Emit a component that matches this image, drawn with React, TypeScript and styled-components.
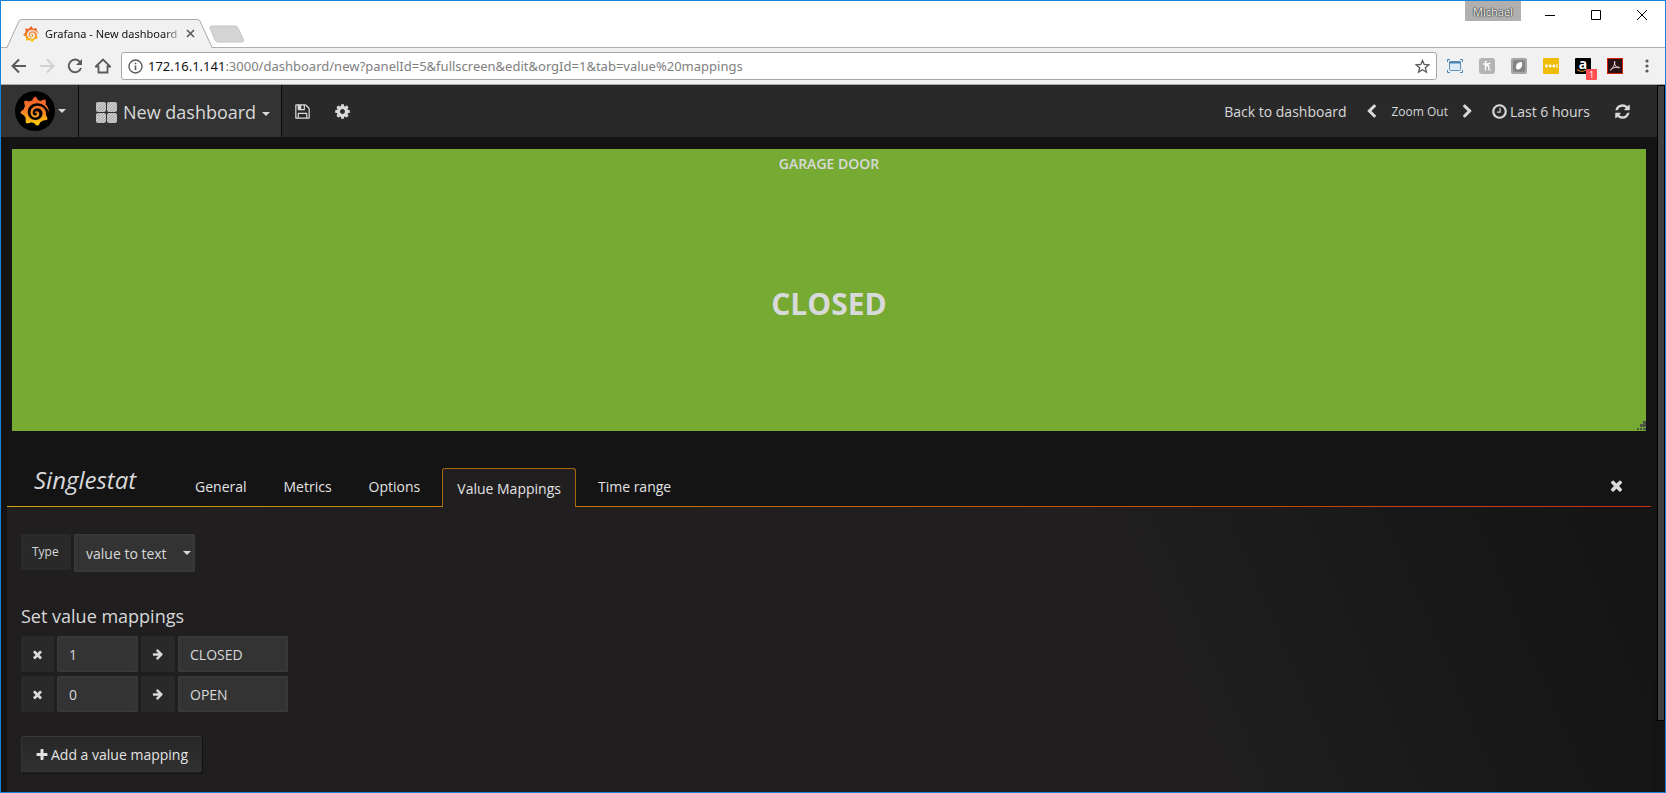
import React, { useState } from "react";
import styled, { createGlobalStyle, css } from "styled-components";

const Global = createGlobalStyle`
  *, *::before, *::after { box-sizing: border-box; }
  html, body, #root { height: 100%; }
  body { margin: 0; overflow: hidden; background: #141414; font-family: "Open Sans", "Noto Sans", sans-serif; }
  button, input, select { font-family: inherit; }
  button { cursor: pointer; }
`;

/* ---------- icons ---------- */

const paths = {
  times: "M1490 1322q0 40-28 68l-136 136q-28 28-68 28t-68-28l-294-294-294 294q-28 28-68 28t-68-28l-136-136q-28-28-28-68t28-68l294-294-294-294q-28-28-28-68t28-68l136-136q28-28 68-28t68 28l294 294 294-294q28-28 68-28t68 28l136 136q28 28 28 68t-28 68l-294 294 294 294q28 28 28 68z",
  plus: "M1600 736v192q0 40-28 68t-68 28h-416v416q0 40-28 68t-68 28h-192q-40 0-68-28t-28-68v-416h-416q-40 0-68-28t-28-68v-192q0-40 28-68t68-28h416v-416q0-40 28-68t68-28h192q40 0 68 28t28 68v416h416q40 0 68 28t28 68z",
  arrow: "M1600 960q0 54-37 91l-651 651q-39 37-91 37-51 0-90-37l-75-75q-38-38-38-91t38-91l293-293h-704q-52 0-84.5-37.5t-32.5-90.5v-128q0-53 32.5-90.5t84.5-37.5h704l-293-294q-38-36-38-90t38-90l75-75q38-38 90-38 53 0 91 38l651 651q37 35 37 90z",
  save: "M512 1536h768v-384h-768v384zm896 0h128v-896q0-14-10-38.5t-20-34.5l-281-281q-10-10-34-20t-39-10v416q0 40-28 68t-68 28h-576q-40 0-68-28t-28-68v-416h-128v1280h128v-416q0-40 28-68t68-28h832q40 0 68 28t28 68v416zm-384-928v-320q0-13-9.5-22.5t-22.5-9.5h-192q-13 0-22.5 9.5t-9.5 22.5v320q0 13 9.5 22.5t22.5 9.5h192q13 0 22.5-9.5t9.5-22.5zm640 32v928q0 40-28 68t-68 28h-1344q-40 0-68-28t-28-68v-1344q0-40 28-68t68-28h928q40 0 88 20t76 48l280 280q28 28 48 76t20 88z",
  cog: "M1152 896q0-106-75-181t-181-75-181 75-75 181 75 181 181 75 181-75 75-181zm512-109v222q0 12-8 23t-20 13l-185 28q-19 54-39 91 35 50 107 138 10 12 10 25t-9 23q-27 37-99 108t-94 71q-12 0-26-9l-138-108q-44 23-91 38-16 136-29 186-7 28-36 28h-222q-14 0-24.5-8.5t-11.5-21.5l-28-184q-49-16-90-37l-141 107q-10 9-25 9-14 0-25-11-126-114-165-168-7-10-7-23 0-12 8-23 15-21 51-66.5t54-70.5q-27-50-41-99l-183-27q-13-2-21-12.5t-8-23.5v-222q0-12 8-23t19-13l186-28q14-46 39-92-40-57-107-138-10-12-10-24 0-10 9-23 26-36 98.5-107.5t94.5-71.5q13 0 26 10l138 107q44-23 91-38 16-136 29-186 7-28 36-28h222q14 0 24.5 8.5t11.5 21.5l28 184q49 16 90 37l142-107q9-9 24-9 13 0 25 10 129 119 165 170 7 8 7 22 0 12-8 23-15 21-51 66.5t-54 70.5q26 50 41 98l183 28q13 2 21 12.5t8 23.5z",
  clock: "M1024 544v448q0 14-9 23t-23 9h-320q-14 0-23-9t-9-23v-64q0-14 9-23t23-9h224v-352q0-14 9-23t23-9h64q14 0 23 9t9 23zm416 352q0-148-73-273t-198-198-273-73-273 73-198 198-73 273 73 273 198 198 273 73 273-73 198-198 73-273zm224 0q0 209-103 385.5t-279.5 279.5-385.5 103-385.5-103-279.5-279.5-103-385.5 103-385.5 279.5-279.5 385.5-103 385.5 103 279.5 279.5 103 385.5z",
  refresh: "M1639 1056q0 5-1 7-64 268-268 434.5t-478 166.5q-146 0-282.5-55t-243.5-157l-129 129q-19 19-45 19t-45-19-19-45v-448q0-26 19-45t45-19h448q26 0 45 19t19 45-19 45l-137 137q71 66 161 102t187 36q134 0 250-65t186-179q11-17 53-117 8-23 30-23h192q13 0 22.5 9.5t9.5 22.5zm25-800v448q0 26-19 45t-45 19h-448q-26 0-45-19t-19-45 19-45l138-138q-148-137-349-137-134 0-250 65t-186 179q-11 17-53 117-8 23-30 23h-199q-13 0-22.5-9.5t-9.5-22.5v-7q65-268 270-434.5t480-166.5q146 0 284 55.5t245 156.5l130-129q19-19 45-19t45 19 19 45z",
  left: "M1427 301l-531 531 531 531q19 19 19 45t-19 45l-166 166q-19 19-45 19t-45-19l-742-742q-19-19-19-45t19-45l742-742q19-19 45-19t45 19l166 166q19 19 19 45t-19 45z",
  right: "M1363 877l-742 742q-19 19-45 19t-45-19l-166-166q-19-19-19-45t19-45l531-531-531-531q-19-19-19-45t19-45l166-166q19-19 45-19t45 19l742 742q19 19 19 45t-19 45z",
};

const Svg = styled.svg`
  display: block;
  flex: none;
`;

function Icon({ name, size }: { name: keyof typeof paths; size: number }) {
  return (
    <Svg width={size} height={size} viewBox="0 0 1792 1792" fill="currentColor" aria-hidden>
      <path d={paths[name]} />
    </Svg>
  );
}

function GrafanaMark({ size }: { size: number }) {
  const id = `flame${size}`;
  return (
    <Svg width={size} height={size} viewBox="0 0 30 30" aria-hidden>
      <defs>
        <linearGradient id={id} x1="0" y1="0" x2="0" y2="1">
          <stop offset="0" stopColor="#f05a28" />
          <stop offset="0.5" stopColor="#f5802a" />
          <stop offset="1" stopColor="#fbd10a" />
        </linearGradient>
      </defs>
      <path
        fill={`url(#${id})`}
        d="M28.8 15.500C28.700 12.600 27.600 10.400 25.600 8.600C26.200 6.400 25.800 4.800 25.400 3.600C23.400 3.600 21.800 4.200 20.600 5C19.800 4.600 19 4.300 18 4.100C17.400 2.200 16 .8 15.200 .4C13.200 1.700 12.600 3.200 12.400 4.200C11.200 4.500 10.200 5 9.400 5.500C7.600 4.700 6 4.600 4.400 4.900C4 7.200 4.500 8.700 5.100 9.900C4.400 10.900 4 12.100 3.800 13.200C2.200 14 1 15.200 .3 16.600C1.500 18.200 2.800 19 4.200 19.400C4.600 20.400 5.100 21.400 5.800 22.300C5.400 24.200 5.600 25.700 6.200 27.200C8.200 27.500 9.800 26.900 11 26.200C12 26.700 13 27 14 27.100C15 28.600 16.300 29.400 17.600 29.800C19.100 28.700 19.900 27.400 20.200 26.200C21.300 25.800 22.300 25.200 23.100 24.400C24.800 24.500 26.400 24 27.600 23.200C27.400 21.200 26.700 19.900 25.800 18.900C26.100 17.500 26 16.300 25.600 15.100C24.500 11.900 21.600 9.800 18 9.700C13.700 9.600 10.600 12.500 10.500 16.200C10.500 19.300 12.700 21.500 15.100 21.500C17.400 21.600 19.400 20 19.300 17.900C19.200 16 17.800 15 16.300 15.200C15.300 15.400 14.800 16.200 15.100 17C15.600 16.700 16.600 16.700 16.900 17.600C17.300 18.700 16.200 19.700 15 19.500C13.400 19.300 12.500 17.800 12.700 16.200C13 13.600 15.200 12.200 17.500 12.300C20.400 12.500 22.500 14.700 22.500 17.600C22.500 21.200 19.600 23.900 15.900 24C11.400 24.100 7.800 20.800 7.800 16C7.800 11 11.900 7.200 17.200 7.300C22.200 7.400 26.400 10.400 28.800 15.500Z"
      />
    </Svg>
  );
}

const Caret = styled.span<{ $low?: boolean }>`
  flex: none;
  width: 0;
  height: 0;
  margin-top: ${(p) => (p.$low ? 4 : 0)}px;
  border: 4px solid transparent;
  border-top-color: currentColor;
  border-bottom: 0;
`;

/* ---------- browser frame ---------- */

const Window = styled.div`
  display: flex;
  flex-direction: column;
  height: 100vh;
  border: 1px solid #1883d7;
  background: #fff;
`;

const TabStrip = styled.div`
  display: flex;
  flex: none;
  height: 47px;
  padding-left: 5px;
  border-bottom: 1px solid #b0b0b0;
`;

const BrowserTab = styled.div`
  position: relative;
  display: flex;
  align-items: center;
  width: 208px;
  height: 29px;
  margin-top: 18px;
  padding: 0 19px 0 17px;
  font-family: "Noto Sans", "Open Sans", sans-serif;
  font-size: 11px;
  color: #111;
`;

const TabShape = styled.svg`
  position: absolute;
  left: 0;
  top: 0;
`;

const TabTitle = styled.span`
  position: relative;
  flex: 1;
  margin: 0 2px 0 6px;
  overflow: hidden;
  white-space: nowrap;
  line-height: 18px;
  mask-image: linear-gradient(90deg, #000 86%, transparent 100%);
`;

const Plain = styled.button`
  position: relative;
  display: flex;
  align-items: center;
  justify-content: center;
  flex: none;
  padding: 0;
  border: 0;
  background: none;
  color: inherit;
`;

const NewTab = styled(Plain)`
  align-self: flex-start;
  margin: 24px 0 0 -5px;
`;

const WindowControls = styled.div`
  display: flex;
  align-items: flex-start;
  margin-left: auto;
`;

const Profile = styled(Plain)`
  width: 56px;
  height: 20px;
  margin-right: 6px;
  background: #b0b0b0;
  color: #fff;
  font-size: 11px;
  text-shadow: 0 0 1px #000, 0 0 2px #000;
`;

const Control = styled(Plain)`
  width: 46px;
  height: 28px;
`;

const Toolbar = styled.div`
  display: flex;
  align-items: center;
  flex: none;
  height: 37px;
  padding: 0 10px;
  border-bottom: 1px solid #a9a9a9;
  background: #f1f1f1;
  color: #5a5a5a;
`;

const NavButtons = styled.div`
  display: flex;
  gap: 12px;
  margin-right: 10px;
`;

const NavButton = styled(Plain)<{ $off?: boolean }>`
  width: 16px;
  height: 16px;
  color: ${(p) => (p.$off ? "#d0d0d0" : "#5a5a5a")};
`;

const Address = styled.div`
  display: flex;
  align-items: center;
  flex: 1;
  height: 28px;
  margin-right: 10px;
  padding: 0 6px;
  border: 1px solid #a6a6a6;
  border-radius: 3px;
  background: #fff;
`;

const Url = styled.span`
  flex: 1;
  margin-left: 5px;
  font-family: "Noto Sans", "Open Sans", sans-serif;
  font-size: 13px;
  line-height: 20px;
  color: #808080;
  b { font-weight: 400; color: #111; }
`;

const Extensions = styled.div`
  display: flex;
  align-items: center;
  gap: 16px;
`;

const AmazonButton = styled(Plain)`
  align-items: flex-start;
  width: 16px;
  height: 16px;
  border-radius: 1px;
  background: #000;
  color: #fff;
  font-size: 14px;
  font-weight: 700;
  line-height: 12px;
`;

const Smile = styled.svg`
  position: absolute;
  left: 2px;
  top: 11px;
`;

const Badge = styled.span`
  position: absolute;
  left: 11px;
  top: 11px;
  width: 11px;
  height: 11px;
  border-radius: 1px;
  background: #ff4f52;
  font-size: 9px;
  font-weight: 400;
  line-height: 11px;
`;

/* ---------- app ---------- */

const Viewport = styled.div`
  display: flex;
  flex: 1;
  min-height: 0;
  background: #141414;
  color: #d8d9da;
`;

const Page = styled.div`
  flex: 1;
  min-width: 0;
  display: flex;
  flex-direction: column;
`;

const ScrollTrack = styled.div`
  flex: none;
  width: 8px;
  background: #141414;
`;

const ScrollThumb = styled.div`
  height: 90%;
  border: 1px solid #000;
  background: #404040;
`;

const Navbar = styled.header`
  display: flex;
  flex: none;
  height: 52px;
  background: #292929;
`;

const NavBlock = styled.button`
  display: flex;
  align-items: center;
  gap: 5px;
  padding: 0 12px 0 14px;
  border: 0;
  border-right: 1px solid #0a0a0a;
  background: #333;
  color: #d8d9da;
  font-size: 18px;
`;

const DashboardPicker = styled(NavBlock)`
  gap: 6px;
  padding: 2px 11px 0 17px;
`;

const LogoDisc = styled.span`
  display: grid;
  place-items: center;
  width: 40px;
  height: 40px;
  margin-right: -2px;
  border-radius: 50%;
  background: #000;
`;

const NavAction = styled(Plain)`
  width: 40px;
  padding-top: 1px;
`;

const TimeNav = styled.nav`
  display: flex;
  align-items: center;
  margin-left: auto;
  padding: 1px 26px 0 0;
  font-size: 14px;
`;

const NavLink = styled.a`
  color: #d8d9da;
  text-decoration: none;
`;

const TimeButton = styled(Plain)<{ $small?: boolean; $before: number }>`
  gap: 2px;
  margin-left: ${(p) => p.$before}px;
  font-size: ${(p) => (p.$small ? 12 : 14)}px;
`;

const Panel = styled.section`
  position: relative;
  display: flex;
  flex-direction: column;
  align-items: center;
  flex: none;
  height: 282px;
  margin: 12px 11px 0;
  background: #77aa33;
`;

const PanelTitle = styled.h1`
  margin: 5px 0 0;
  font-size: 14px;
  line-height: 20px;
  font-weight: 600;
`;

const PanelValue = styled.div`
  margin-top: 110px;
  font-size: 30px;
  line-height: 40px;
  font-weight: 700;
`;

const Grip = styled.svg`
  position: absolute;
  right: 0;
  bottom: 0;
`;

const Editor = styled.section`
  display: flex;
  flex-direction: column;
  flex: 1;
  margin: 37px 6px 0;
`;

const EditorHeader = styled.div`
  display: flex;
  align-items: flex-start;
  height: 39px;
  padding: 0 26px 0 27px;
  border-bottom: 1px solid;
  border-image: linear-gradient(90deg, #d0a40c, #c06a0c 45%, #c8300c) 1;
`;

const EditorTitle = styled.h2`
  width: 146px;
  margin: 0;
  font-size: 24px;
  line-height: 24px;
  font-style: italic;
  font-weight: 400;
`;

const Tabs = styled.div`
  display: flex;
  gap: 7px;
`;

const TabButton = styled.button<{ $active: boolean }>`
  height: 36px;
  padding: 0 14px;
  border: 1px solid transparent;
  border-bottom: 0;
  background: none;
  color: #e3e3e3;
  font-size: 14px;
  ${(p) =>
    p.$active &&
    css`
      height: 39px;
      border-color: #a8680f;
      border-radius: 3px 3px 0 0;
      background: #201e1f;
    `}
`;

const CloseEditor = styled(Plain)`
  margin: 9px 0 0 auto;
`;

const EditorBody = styled.div`
  flex: 1;
  padding: 27px 14px 0;
  background: linear-gradient(67deg, #201e1f 68%, #141414 100%);
`;

const Row = styled.div`
  display: flex;
  align-items: flex-start;
  gap: 3px;
  margin-bottom: 4px;
`;

const cell = css`
  height: 36px;
  border: 0;
  border-radius: 1px;
`;

const FieldLabel = styled.label`
  ${cell}
  width: 50px;
  padding-left: 11px;
  background: #292929;
  font-size: 12px;
  line-height: 36px;
`;

const SelectWrap = styled.span`
  position: relative;
  display: flex;
  align-items: center;
  ${Caret} {
    position: absolute;
    right: 4px;
  }
`;

const fieldLook = css`
  ${cell}
  border: 1px solid #3a3a3a;
  background: #333;
  box-shadow: inset 0 0 3px #3c3c3c;
  color: #d8d9da;
  font-size: 14px;
  outline: 0;
`;

const Select = styled.select`
  ${fieldLook}
  width: 121px;
  height: 38px;
  padding: 0 11px;
  appearance: none;
`;

const Input = styled.input<{ $width: number }>`
  ${fieldLook}
  width: ${(p) => p.$width}px;
  padding: 0 11px;
`;

const IconCell = styled.button`
  ${cell}
  display: grid;
  place-items: center;
  width: 33px;
  padding: 0;
  background: #292929;
  color: #d8d9da;
`;

const ArrowCell = styled(IconCell).attrs({ as: "span" })`
  width: 34px;
`;

const SectionTitle = styled.h3`
  margin: 31px 0 7px;
  font-size: 18px;
  line-height: 26px;
  font-weight: 400;
`;

const AddButton = styled.button`
  display: flex;
  align-items: center;
  gap: 2px;
  height: 37px;
  margin-top: 24px;
  padding: 0 13px;
  border: 1px solid;
  border-color: #3a3a3a #2c2c2c #222 #353535;
  border-radius: 2px;
  background: linear-gradient(#272727, #303030);
  box-shadow: 1px 1px 0 #111;
  color: #e3e3e3;
  font-size: 14px;
`;

const tabNames = ["General", "Metrics", "Options", "Value Mappings", "Time range"];

export default function App() {
  const [active, setActive] = useState("Value Mappings");
  const [mappings, setMappings] = useState([
    { value: "1", text: "CLOSED" },
    { value: "0", text: "OPEN" },
  ]);
  const edit = (i: number, patch: object) =>
    setMappings(mappings.map((m, j) => (j === i ? { ...m, ...patch } : m)));

  return (
    <Window>
      <Global />
      <TabStrip>
        <BrowserTab>
          <TabShape width="208" height="30" viewBox="0 0 208 30">
            <path d="M0 29H1L13 2Q14 .5 16 .5H191Q193 .5 194 2L206 29H208V30H0Z" fill="#f1f1f1" />
            <path d="M0 28.500H1L13 2Q14 .5 16 .5H191Q193 .5 194 2L206 28.500H208" fill="none" stroke="#a9a9a9" />
          </TabShape>
          <Plain as="span"><GrafanaMark size={16} /></Plain>
          <TabTitle>Grafana - New dashboard</TabTitle>
          <Plain aria-label="Close tab">
            <Svg width="9" height="9" viewBox="0 0 9 9"><path d="M1 1L8 8M8 1L1 8" stroke="#5a5a5a" strokeWidth="1.600" /></Svg>
          </Plain>
        </BrowserTab>
        <NewTab aria-label="New tab">
          <Svg width="36" height="18" viewBox="0 0 36 18">
            <path d="M3 1H26Q28 1 29 3L34.500 15Q35 17 33 17H9Q7 17 6 15L1 3Q.5 1 3 1Z" fill="#d4d4d4" stroke="#c4c4c4" />
          </Svg>
        </NewTab>
        <WindowControls>
          <Profile>Michael</Profile>
          <Control aria-label="Minimize">
            <Svg width="10" height="10" viewBox="0 0 10 10"><path d="M0 5.500H10" stroke="#000" /></Svg>
          </Control>
          <Control aria-label="Maximize">
            <Svg width="10" height="10" viewBox="0 0 10 10"><path d="M.5 .5H9.500V9.500H.5Z" stroke="#000" fill="none" /></Svg>
          </Control>
          <Control aria-label="Close">
            <Svg width="10" height="10" viewBox="0 0 10 10"><path d="M0 0L10 10M10 0L0 10" stroke="#000" /></Svg>
          </Control>
        </WindowControls>
      </TabStrip>

      <Toolbar>
        <NavButtons>
          <NavButton aria-label="Back">
            <Svg width="16" height="16" viewBox="0 0 16 16"><path d="M15 8H2M8 1.500L1.500 8L8 14.500" fill="none" stroke="currentColor" strokeWidth="2" /></Svg>
          </NavButton>
          <NavButton aria-label="Forward" $off>
            <Svg width="16" height="16" viewBox="0 0 16 16"><path d="M1 8H14M8 1.500L14.500 8L8 14.500" fill="none" stroke="currentColor" strokeWidth="2" /></Svg>
          </NavButton>
          <NavButton aria-label="Reload">
            <Svg width="16" height="16" viewBox="0 0 16 16">
              <path d="M13 4A6.300 6.300 0 1 0 14 10" fill="none" stroke="currentColor" strokeWidth="2" />
              <path d="M15 1V7H9Z" fill="currentColor" />
            </Svg>
          </NavButton>
          <NavButton aria-label="Home">
            <Svg width="16" height="16" viewBox="0 0 16 16"><path d="M.8 8.500L8 1.500L15.200 8.500H12.500V14.500H3.500V8.500Z" fill="none" stroke="currentColor" strokeWidth="1.800" /></Svg>
          </NavButton>
        </NavButtons>
        <Address>
          <Svg width="15" height="15" viewBox="0 0 15 15">
            <circle cx="7.500" cy="7.500" r="6.500" fill="none" stroke="#5a5a5a" strokeWidth="1.400" />
            <path d="M7.500 6.500V11M7.500 3.800V5.300" stroke="#5a5a5a" strokeWidth="1.600" />
          </Svg>
          <Url><b>172.16.1.141</b>:3000/dashboard/new?panelId=5&amp;fullscreen&amp;edit&amp;orgId=1&amp;tab=value%20mappings</Url>
          <Plain aria-label="Bookmark">
            <Svg width="15" height="15" viewBox="0 0 15 15"><path d="M7.500 1.500L9.200 5.500L13.800 5.800L10.300 8.700L11.400 13.200L7.500 10.800L3.600 13.200L4.700 8.700L1.200 5.800L5.800 5.500Z" fill="none" stroke="#5a5a5a" strokeWidth="1.300" /></Svg>
          </Plain>
        </Address>
        <Extensions>
          <Plain aria-label="Window resizer">
            <Svg width="16" height="16" viewBox="0 0 16 16">
              <rect x="2.500" y="3.500" width="11" height="9" rx="1" fill="#dcebf5" stroke="#5f93bd" />
              <path d="M2 4.500H14" stroke="#4b85b4" strokeWidth="2" />
              <path d="M.5 4V1.500H3M13 1.500H15.500V4M15.500 12V14.500H13M3 14.500H.5V12" fill="none" stroke="#4b85b4" />
            </Svg>
          </Plain>
          <Plain aria-label="Coupons">
            <Svg width="16" height="16" viewBox="0 0 16 16">
              <rect width="16" height="16" rx="3" fill="#b4b4b4" />
              <path d="M6.500 12.500V4.500Q6.500 3 8 3.500M6.500 9Q9.800 5.500 9.800 8.500V11Q10 12.500 11.500 11.500M4 6Q8 6.500 11.500 5" fill="none" stroke="#fff" strokeWidth="1.300" />
            </Svg>
          </Plain>
          <Plain aria-label="Reader">
            <Svg width="16" height="16" viewBox="0 0 16 16">
              <rect width="16" height="16" rx="2" fill="#a6a6a6" />
              <rect x="2" y="2" width="12" height="12" rx="2" fill="#858585" />
              <path d="M5 9Q5 4 11 4Q12 10 7.500 11.500Q5 12 5 9Z" fill="#fff" />
            </Svg>
          </Plain>
          <Plain aria-label="Passwords">
            <Svg width="16" height="16" viewBox="0 0 16 16">
              <rect width="16" height="16" rx="1" fill="#f0bc0a" />
              <circle cx="3.500" cy="8" r="1.400" fill="#fff" />
              <circle cx="7.200" cy="8" r="1.400" fill="#fff" />
              <circle cx="10.900" cy="8" r="1.400" fill="#fff" />
              <path d="M14 6V10" stroke="#fff" />
            </Svg>
          </Plain>
          <AmazonButton aria-label="Shopping">
            a
            <Smile width="10" height="4" viewBox="0 0 10 4"><path d="M0 .5Q4.500 4 9 1" fill="none" stroke="#f0a030" /></Smile>
            <Badge>1</Badge>
          </AmazonButton>
          <Plain aria-label="PDF">
            <Svg width="16" height="16" viewBox="0 0 16 16">
              <rect x=".5" y=".5" width="15" height="15" fill="#2b1214" stroke="#d81e05" />
              <path d="M3 12.500C5 11 8.500 6 7.800 3.500C7 3 7 6 9 8.500C11 10.500 13 10 12.500 9.300C11 8.500 5 9.500 3.500 11.800" fill="none" stroke="#e8dede" />
            </Svg>
          </Plain>
          <Plain aria-label="Menu">
            <Svg width="16" height="16" viewBox="0 0 16 16" fill="#5a5a5a">
              <circle cx="8" cy="3" r="1.600" /><circle cx="8" cy="8" r="1.600" /><circle cx="8" cy="13" r="1.600" />
            </Svg>
          </Plain>
        </Extensions>
      </Toolbar>

      <Viewport>
        <Page>
          <Navbar>
            <NavBlock aria-label="Main menu">
              <LogoDisc><GrafanaMark size={30} /></LogoDisc>
              <Caret />
            </NavBlock>
            <DashboardPicker>
              <Svg width="21" height="21" viewBox="0 0 21 21">
                <defs>
                  <pattern id="hatch" width="2" height="2" patternUnits="userSpaceOnUse" patternTransform="rotate(45)">
                    <rect width="2" height="2" fill="#d8d8d8" /><rect width="1" height="2" fill="#a4a4a4" />
                  </pattern>
                </defs>
                <g fill="url(#hatch)">
                  <rect width="10" height="10" rx="2" /><rect x="11" width="10" height="10" rx="2" />
                  <rect y="11" width="10" height="10" rx="2" /><rect x="11" y="11" width="10" height="10" rx="2" />
                </g>
              </Svg>
              New dashboard
              <Caret $low />
            </DashboardPicker>
            <NavAction aria-label="Save dashboard"><Icon name="save" size={17} /></NavAction>
            <NavAction aria-label="Settings"><Icon name="cog" size={17} /></NavAction>
            <TimeNav>
              <NavLink href="#dashboard">Back to dashboard</NavLink>
              <TimeButton $before={18} aria-label="Earlier"><Icon name="left" size={15} /></TimeButton>
              <TimeButton $before={12} $small>Zoom Out</TimeButton>
              <TimeButton $before={12} aria-label="Later"><Icon name="right" size={15} /></TimeButton>
              <TimeButton $before={16}><Icon name="clock" size={17} />Last 6 hours</TimeButton>
              <TimeButton $before={24} aria-label="Refresh"><Icon name="refresh" size={17} /></TimeButton>
            </TimeNav>
          </Navbar>

          <Panel>
            <PanelTitle>GARAGE DOOR</PanelTitle>
            <PanelValue>CLOSED</PanelValue>
            <Grip width="10" height="10" viewBox="0 0 10 10" fill="#4f5545">
              <path d="M7 0h3v3H7zM4 3h3v3H4zM7 3h3v3H7zM1 7h2v2H1zM4 7h2v2H4zM7 7h3v2H7z" />
            </Grip>
          </Panel>

          <Editor>
            <EditorHeader>
              <EditorTitle>Singlestat</EditorTitle>
              <Tabs role="tablist">
                {tabNames.map((name) => (
                  <TabButton key={name} role="tab" aria-selected={name === active} $active={name === active} onClick={() => setActive(name)}>
                    {name}
                  </TabButton>
                ))}
              </Tabs>
              <CloseEditor aria-label="Close editor"><Icon name="times" size={17} /></CloseEditor>
            </EditorHeader>
            <EditorBody>
              <Row>
                <FieldLabel htmlFor="type">Type</FieldLabel>
                <SelectWrap>
                  <Select id="type" defaultValue="value to text">
                    <option>value to text</option>
                    <option>range to text</option>
                  </Select>
                  <Caret />
                </SelectWrap>
              </Row>
              <SectionTitle>Set value mappings</SectionTitle>
              {mappings.map((m, i) => (
                <Row key={i}>
                  <IconCell aria-label="Remove mapping" onClick={() => setMappings(mappings.filter((_, j) => j !== i))}>
                    <Icon name="times" size={13} />
                  </IconCell>
                  <Input $width={81} aria-label="Value" value={m.value} onChange={(e) => edit(i, { value: e.target.value })} />
                  <ArrowCell><Icon name="arrow" size={12} /></ArrowCell>
                  <Input $width={110} aria-label="Text" value={m.text} onChange={(e) => edit(i, { text: e.target.value })} />
                </Row>
              ))}
              <AddButton onClick={() => setMappings([...mappings, { value: "", text: "" }])}>
                <Icon name="plus" size={14} />Add a value mapping
              </AddButton>
            </EditorBody>
          </Editor>
        </Page>
        <ScrollTrack><ScrollThumb /></ScrollTrack>
      </Viewport>
    </Window>
  );
}
